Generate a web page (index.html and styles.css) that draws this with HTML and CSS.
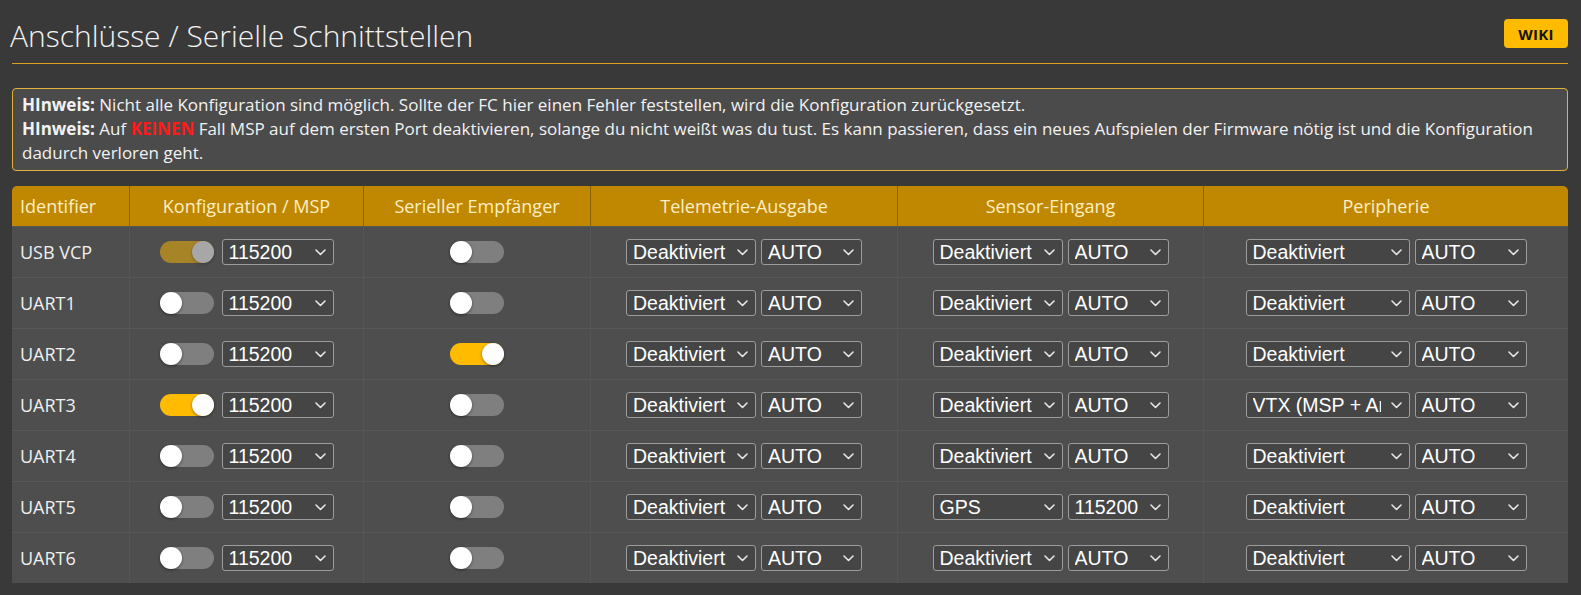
FILE: index.html
```html
<!DOCTYPE html>
<html lang="de">
<head>
<meta charset="utf-8">
<title>Anschlüsse</title>
<link rel="stylesheet" href="styles.css">
</head>
<body>
<div class="page">
  <div class="title-bar">
    <h1 class="title">Anschlüsse / Serielle Schnittstellen</h1>
    <a class="wiki">WIKI</a>
  </div>
  <div class="note">
    <p><strong>HInweis:</strong> Nicht alle Konfiguration sind möglich. Sollte der FC hier einen Fehler feststellen, wird die Konfiguration zurückgesetzt.</p>
    <p><strong>HInweis:</strong> Auf <span class="red">KEINEN</span> Fall MSP auf dem ersten Port deaktivieren, solange du nicht weißt was du tust. Es kann passieren, dass ein neues Aufspielen der Firmware nötig ist und die Konfiguration dadurch verloren geht.</p>
  </div>
  <table class="ports">
    <colgroup>
      <col class="c-id"><col class="c-msp"><col class="c-rx"><col class="c-tel"><col class="c-sen"><col class="c-per">
    </colgroup>
    <thead>
      <tr>
        <th class="left">Identifier</th>
        <th>Konfiguration / MSP</th>
        <th>Serieller Empfänger</th>
        <th>Telemetrie-Ausgabe</th>
        <th>Sensor-Eingang</th>
        <th>Peripherie</th>
      </tr>
    </thead>
    <tbody id="rows"></tbody>
  </table>
</div>
<script src="app.js"></script>
</body>
</html>
```

FILE: app.js
```js
const chev = '<svg class="chev" width="11" height="7" viewBox="0 0 11 7"><polyline points="1,1 5.5,5.5 10,1" fill="none" stroke="#e6e6e6" stroke-width="1.6" stroke-linecap="round" stroke-linejoin="round"/></svg>';
function sel(text, w) {
  return '<span class="sel ' + w + '"><span class="txt">' + text + '</span>' + chev + '</span>';
}
function tog(state) {
  return '<span class="toggle ' + state + '"><span class="knob"></span></span>';
}
const rows = [
  ['USB VCP', 'dis', 'off', 'Deaktiviert', 'AUTO', 'Deaktiviert', 'AUTO', 'Deaktiviert', 'AUTO'],
  ['UART1', 'off', 'off', 'Deaktiviert', 'AUTO', 'Deaktiviert', 'AUTO', 'Deaktiviert', 'AUTO'],
  ['UART2', 'off', 'on', 'Deaktiviert', 'AUTO', 'Deaktiviert', 'AUTO', 'Deaktiviert', 'AUTO'],
  ['UART3', 'on', 'off', 'Deaktiviert', 'AUTO', 'Deaktiviert', 'AUTO', 'VTX (MSP + Anzeigeport)', 'AUTO'],
  ['UART4', 'off', 'off', 'Deaktiviert', 'AUTO', 'Deaktiviert', 'AUTO', 'Deaktiviert', 'AUTO'],
  ['UART5', 'off', 'off', 'Deaktiviert', 'AUTO', 'GPS', '115200', 'Deaktiviert', 'AUTO'],
  ['UART6', 'off', 'off', 'Deaktiviert', 'AUTO', 'Deaktiviert', 'AUTO', 'Deaktiviert', 'AUTO']
];
document.getElementById('rows').innerHTML = rows.map(r =>
  '<tr>' +
  '<td class="left">' + r[0] + '</td>' +
  '<td><div class="ctl msp">' + tog(r[1]) + sel('115200', 'w112') + '</div></td>' +
  '<td><div class="ctl">' + tog(r[2]) + '</div></td>' +
  '<td><div class="ctl">' + sel(r[3], 'w130') + sel(r[4], 'w101') + '</div></td>' +
  '<td><div class="ctl">' + sel(r[5], 'w130') + sel(r[6], 'w101') + '</div></td>' +
  '<td><div class="ctl">' + sel(r[7], 'w164') + sel(r[8], 'w112') + '</div></td>' +
  '</tr>'
).join('');
```

FILE: styles.css
```css
html, body {
  margin: 0;
  background: #393939;
  height: 100%;
  overflow: hidden;
}
body {
  font-family: "Open Sans", sans-serif;
  color: #ffffff;
}
.page {
  padding: 0 13px 0 12px;
}
.title-bar {
  display: flex;
  justify-content: space-between;
  align-items: flex-start;
  height: 64px;
  box-sizing: border-box;
  border-bottom: 1px solid #d9a21b;
}
.title {
  margin: 0;
  margin-left: -2px;
  padding-top: 16px;
  font-weight: 300;
  font-size: 30px;
  line-height: 40px;
  color: #f2f2f2;
}
.wiki {
  margin-top: 19px;
  width: 64px;
  height: 29px;
  border-radius: 4px;
  background: #ffbb00;
  color: #141414;
  font-weight: 700;
  font-size: 15px;
  letter-spacing: 0.3px;
  display: flex;
  align-items: center;
  justify-content: center;
}
.note {
  margin-top: 24px;
  height: 83px;
  box-sizing: border-box;
  border: 1px solid #e2b33a;
  border-radius: 4px;
  background: #4b4b4b;
  padding: 4px 9px 5px;
  font-size: 17px;
  line-height: 24px;
  color: #f2f2f2;
}
.note p {
  margin: 0;
}
.note strong {
  font-weight: 700;
}
.red {
  color: #ff1a1a;
  font-weight: 700;
}
.ports {
  margin-top: 15px;
  width: 1556px;
  table-layout: fixed;
  border-collapse: separate;
  border-spacing: 0;
}
.c-id { width: 118px; }
.c-msp { width: 234px; }
.c-rx { width: 227px; }
.c-tel { width: 307px; }
.c-sen { width: 306px; }
.c-per { width: 364px; }
.ports th {
  height: 40px;
  padding: 0;
  background: #c08800;
  color: #fdeec4;
  font-weight: 400;
  font-size: 18px;
  text-align: center;
  border-right: 1px solid #8a6208;
}
.ports th:first-child { border-top-left-radius: 5px; }
.ports th:last-child { border-top-right-radius: 5px; border-right: 0; }
.ports td {
  height: 50px;
  padding: 0;
  background: #4e4e4e;
  border-top: 1px solid #575757;
  border-right: 1px solid #555555;
  font-size: 18px;
  color: #f0f0f0;
  text-align: center;
}
.ports td:last-child { border-right: 0; }
.ports .left {
  text-align: left;
  padding-left: 8px;
}
.ctl {
  display: flex;
  justify-content: center;
  align-items: center;
  gap: 5px;
}
.ctl.msp {
  gap: 8px;
}
.toggle {
  display: inline-flex;
  justify-content: flex-start;
  width: 54px;
  height: 22px;
  border-radius: 11px;
  background: #7f7f7f;
}
.toggle.on,
.toggle.dis {
  background: #ffbb00;
  justify-content: flex-end;
}
.toggle.dis {
  opacity: 0.5;
}
.knob {
  width: 22px;
  height: 22px;
  border-radius: 50%;
  background: #ffffff;
  box-shadow: 0 1px 3px rgba(0, 0, 0, 0.45);
}
.sel {
  display: inline-flex;
  align-items: center;
  justify-content: space-between;
  gap: 10px;
  height: 26px;
  box-sizing: border-box;
  border: 1px solid #9c9c9c;
  border-radius: 3px;
  background: #454545;
  padding: 0 7px 0 6px;
  font-family: "Liberation Sans", Arial, sans-serif;
  font-size: 19.5px;
  color: #ffffff;
}
.sel .txt {
  flex: 1;
  min-width: 0;
  overflow: hidden;
  white-space: nowrap;
  text-align: left;
}
.chev {
  flex: none;
}
.w101 { width: 101px; }
.w112 { width: 112px; }
.w130 { width: 130px; }
.w164 { width: 164px; }
```
